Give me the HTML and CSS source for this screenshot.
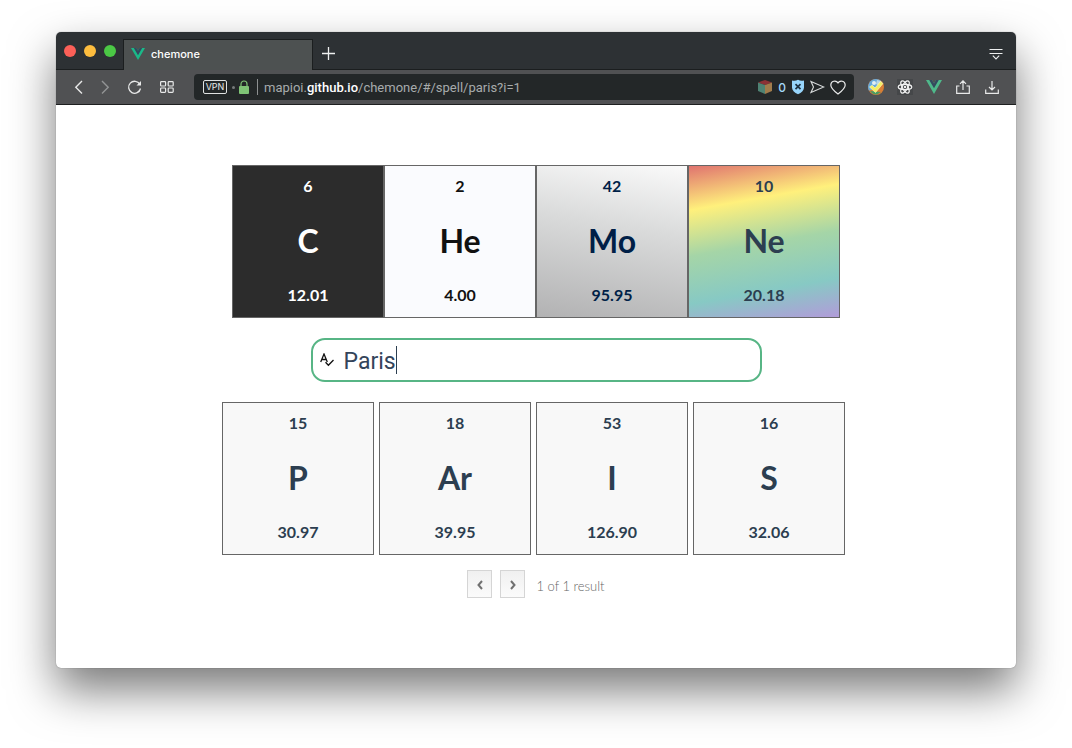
FILE: index.html
```html
<!DOCTYPE html>
<html lang="en">
<head>
<meta charset="utf-8">
<title>chemone</title>
<link rel="stylesheet" href="styles.css">
</head>
<body>
<div class="window">
  <header class="tabstrip">
    <div class="lights">
      <button class="light close" aria-label="Close"></button>
      <button class="light minimize" aria-label="Minimize"></button>
      <button class="light expand" aria-label="Zoom"></button>
    </div>
    <a class="tab" href="#/spell/paris">
      <svg width="14" height="14" viewBox="0 0 14 14"><path d="M0 1h5.4L7 3.8 8.600 1H14L7 13z" fill="#1bb988"/><path d="M2.800 1h2.600L7 3.800 8.600 1h2.600L7 8.200z" fill="#34495e"/></svg>
      <span>chemone</span>
    </a>
    <button class="icon newtab" aria-label="New tab">
      <svg width="13" height="13" viewBox="0 0 13 13" fill="none" stroke="#eef0f0" stroke-width="1.300"><path d="M6.500 0v13M0 6.500h13"/></svg>
    </button>
    <button class="icon tabmenu" aria-label="Tab menu">
      <svg width="14" height="12" viewBox="0 0 14 12" fill="none" stroke="#eef0f0" stroke-width="1.100"><path d="M.5 1.500h13M.5 5.500h13M3.800 7.700 7 11l3.200-3.300"/></svg>
    </button>
  </header>

  <nav class="toolbar">
    <button class="icon" aria-label="Back"><svg width="16" height="16" viewBox="0 0 16 16" fill="none" stroke="#e8e9e9" stroke-width="1.400"><path d="M11 2 4.800 8.200 11 14.400"/></svg></button>
    <button class="icon" aria-label="Forward"><svg width="16" height="16" viewBox="0 0 16 16" fill="none" stroke="#929495" stroke-width="1.400"><path d="m5 2 6.200 6.200L5 14.400"/></svg></button>
    <button class="icon reload" aria-label="Reload"><svg width="16" height="16" viewBox="0 0 16 16" fill="none" stroke="#e8e9e9" stroke-width="1.300"><path d="M12.800 5.200A6 6 0 1 0 13.500 9.500"/><path d="M14 2v4.500H9.500z" fill="#e8e9e9" stroke="none"/></svg></button>
    <button class="icon speed" aria-label="Speed dial"><svg width="14" height="12" viewBox="0 0 14 12" fill="none" stroke="#e8e9e9" stroke-width="1.200"><rect x=".6" y=".6" width="5" height="4.400" rx=".8"/><rect x="8.200" y=".6" width="5" height="4.400" rx=".8"/><rect x=".6" y="7" width="5" height="4.400" rx=".8"/><rect x="8.200" y="7" width="5" height="4.400" rx=".8"/></svg></button>

    <div class="address">
      <button class="vpn">VPN</button>
      <span class="dot"></span>
      <svg class="lock" width="10" height="14" viewBox="0 0 10 14"><rect x="0" y="6" width="10" height="8" rx="1" fill="#7fc476"/><path d="M2 6V4a3 3 0 0 1 6 0v2" fill="none" stroke="#7fc476" stroke-width="1.200"/></svg>
      <span class="rule"></span>
      <a class="url" href="#/spell/paris?i=1">mapioi.<b>github.io</b>/chemone/#/spell/paris?i=1</a>
      <div class="badges">
        <svg width="16" height="16" viewBox="0 0 16 16"><path d="m8 1 7 2.500L8 6 1 3.500z" fill="#8c3136"/><path d="M1 3.500 8 6v9l-7-3z" fill="#4e8273"/><path d="M15 3.500 8 6v9l7-3z" fill="#a17c4c"/></svg>
        <span class="count">0</span>
        <svg width="14" height="16" viewBox="0 0 14 16"><path d="M1 1.500Q4 2.500 7 .8q3 1.700 6 .7v7.300Q12.500 13 7 15.300 1.500 13 1 8.800z" fill="#97d5fb"/><path d="m4.500 5.200 5 5m0-5-5 5" stroke="#1d3344" stroke-width="1.700"/></svg>
        <svg width="15" height="14" viewBox="0 0 15 14" fill="none" stroke="#d9dcdc" stroke-width="1.100"><path d="M1 1.500 13.800 7 1 12.500 3.500 7z"/></svg>
        <svg width="16" height="15" viewBox="0 0 16 15" fill="none" stroke="#e8e9e9" stroke-width="1.200"><path d="M8 14C3.500 10.500.8 8 .8 4.900A3.900 3.900 0 0 1 8 2.900a3.900 3.900 0 0 1 7.200 2C15.200 8 12.500 10.500 8 14z"/></svg>
      </div>
    </div>

    <div class="extensions">
      <button class="icon" aria-label="Web check"><svg width="18" height="18" viewBox="0 0 18 18"><circle cx="9" cy="9" r="8" fill="#d87e35"/><path d="M9 1A8 8 0 0 0 2 12.800L11 9l3-6Q12 1 9 1z" fill="#66a9dc"/><path d="m10 2 4 1 1 3-3 2-3-2z" fill="#b8d6e6"/><circle cx="7" cy="5" r="2" fill="#e2eef5"/><path d="m3 13 11 1-4 2.500q-4 .5-7-3.500z" fill="#489b62"/><path d="m2.500 9 2.700-1.800L8 10l5.500-6.500 2.500 2-7.500 9z" fill="#f5ef63" stroke="#fffbc0" stroke-width=".6"/></svg></button>
      <button class="icon" aria-label="React tools"><svg width="16" height="16" viewBox="0 0 16 16" fill="none" stroke="#f2f2f2" stroke-width="1.200"><path d="M0 0h16v16H0z" fill="#454749" stroke="none"/><ellipse cx="8" cy="8" rx="6.800" ry="2.700"/><ellipse cx="8" cy="8" rx="6.800" ry="2.700" transform="rotate(60 8 8)"/><ellipse cx="8" cy="8" rx="6.800" ry="2.700" transform="rotate(120 8 8)"/><circle cx="8" cy="8" r="1.200" fill="#f2f2f2" stroke="none"/></svg></button>
      <button class="icon" aria-label="Vue tools"><svg width="16" height="14" viewBox="0 0 16 14"><path d="M0 0h6l2 3.400L10 0h6L8 14z" fill="#4fb98b"/><path d="M3.200 0H6l2 3.400L10 0h2.800L8 8.300z" fill="#35495e"/></svg></button>
      <button class="icon" aria-label="Share"><svg width="14" height="14" viewBox="0 0 14 14" fill="none" stroke="#e8e9e9" stroke-width="1.200"><path d="M3.500 6H.7v7.400h12.600V6h-2.800M7 10V1M4 3.800l3-3 3 3"/></svg></button>
      <button class="icon" aria-label="Downloads"><svg width="14" height="14" viewBox="0 0 14 14" fill="none" stroke="#e8e9e9" stroke-width="1.200"><path d="M.7 9.500v3.900h12.600V9.500M7 1v9M4 7l3 3 3-3"/></svg></button>
    </div>
  </nav>

  <main class="page">
    <section class="title">
      <article class="element carbon"><span>6</span><strong>C</strong><span>12.01</span></article>
      <article class="element helium"><span>2</span><strong>He</strong><span>4.00</span></article>
      <article class="element molybdenum"><span>42</span><strong>Mo</strong><span>95.95</span></article>
      <article class="element neon"><span>10</span><strong>Ne</strong><span>20.18</span></article>
    </section>

    <label class="search" for="word">
      <svg width="14" height="14" viewBox="0 0 14 14" fill="none" stroke="#111" stroke-width="1.300"><path d="M.7 9 4 1l3.300 8M1.900 6.500h4.200M5.500 9.300l2.900 3L13.500 7"/></svg>
      <input id="word" type="text" value="Paris" aria-label="Word to spell" autocomplete="off">
      <span class="caret"></span>
    </label>

    <section class="spelling">
      <article class="element"><span>15</span><strong>P</strong><span>30.97</span></article>
      <article class="element"><span>18</span><strong>Ar</strong><span>39.95</span></article>
      <article class="element"><span>53</span><strong>I</strong><span>126.90</span></article>
      <article class="element"><span>16</span><strong>S</strong><span>32.06</span></article>
    </section>

    <footer class="pager">
      <button aria-label="Previous"><svg width="8" height="10" viewBox="0 0 8 10" fill="none" stroke="#707070" stroke-width="2"><path d="M6 1 2.500 5 6 9"/></svg></button>
      <button aria-label="Next"><svg width="8" height="10" viewBox="0 0 8 10" fill="none" stroke="#707070" stroke-width="2"><path d="M2 1l3.500 4L2 9"/></svg></button>
      <span>1 of 1 result</span>
    </footer>
  </main>
</div>
</body>
</html>
```
FILE: styles.css
```css
* { box-sizing: border-box; }

body {
  margin: 0;
  min-height: 100vh;
  padding: 32px 56px 80px;
  display: flex;
  background: #fff;
  font-family: Inter, "Liberation Sans", sans-serif;
}

button { padding: 0; border: 0; background: none; font: inherit; }
svg { display: block; flex: none; }

.window {
  flex: 1;
  display: flex;
  flex-direction: column;
  border-radius: 5px;
  background: #fff;
  box-shadow: 0 0 1px rgba(0, 0, 0, .5), 0 22px 46px rgba(0, 0, 0, .53);
}

.tabstrip {
  display: flex;
  align-items: flex-end;
  height: 38px;
  border-bottom: 1px solid #1b1e1f;
  border-radius: 5px 5px 0 0;
  background: #2d3134;
}

.lights { display: flex; gap: 8px; padding: 0 7px 12px 8px; }
.light { width: 12px; height: 12px; border-radius: 50%; }
.close { background: #fc6058; }
.minimize { background: #fdbd3e; }
.expand { background: #4bc845; }

.tab {
  display: flex;
  align-items: center;
  gap: 6px;
  width: 190px;
  height: 31px;
  margin-bottom: -1px;
  padding: 0 7px 2px;
  border: 1px solid #1b1e1f;
  border-bottom: 0;
  background: #4d5151;
  color: #fff;
  font-size: 11px;
  font-weight: 500;
  text-decoration: none;
}

.icon { display: flex; align-items: center; justify-content: center; }
.newtab { height: 32px; margin-left: 9px; }
.tabmenu { height: 30px; margin: 0 13px 0 auto; }

.toolbar {
  display: flex;
  align-items: center;
  height: 35px;
  padding: 0 15px;
  gap: 10px;
  border-bottom: 1px solid #1d1f20;
  background: #505153;
}

.reload { margin-left: 4px; }
.speed { margin-left: 7px; }

.address {
  flex: 1;
  display: flex;
  align-items: center;
  height: 26px;
  margin-left: 10px;
  padding: 0 8px 0 9px;
  border-radius: 4px;
  background: #232728;
}

.vpn {
  width: 24px;
  height: 14px;
  border: 1px solid #dfe1e1;
  border-radius: 2px;
  color: #e8eaea;
  font-size: 9px;
  line-height: 12px;
}

.dot { width: 3px; height: 3px; margin: 0 4px 0 5px; border-radius: 50%; background: #777b7c; }
.rule { width: 1px; height: 16px; margin: 0 6px 0 8px; background: #8d9091; }
.url { color: #a7abac; font-family: Roboto, "Liberation Sans", sans-serif; font-size: 13px; text-decoration: none; white-space: nowrap; }
.url b { color: #fff; font-weight: 500; }
.badges { display: flex; align-items: center; gap: 5px; margin-left: auto; }
.count { color: #a5d9f8; font-size: 12px; font-weight: 500; }

.extensions { display: flex; align-items: center; gap: 11px; margin-left: 3px; }
.extensions .icon { width: 18px; }

.page {
  flex: 1;
  display: flex;
  flex-direction: column;
  align-items: center;
  padding: 60px 16px;
  color: #2c3e50;
  font-family: Lato, "Noto Sans", sans-serif;
}

.title, .spelling { display: flex; flex-wrap: wrap; justify-content: center; }
.spelling { gap: 5px; padding-right: 5px; }

.element {
  display: flex;
  flex-direction: column;
  justify-content: space-between;
  width: 152px;
  height: 153px;
  padding: 10px 0 12px;
  border: 1px solid #666;
  background: #f8f8f8;
  font-size: 16px;
  font-weight: 700;
  line-height: 20px;
  text-align: center;
}

.element strong { font-size: 32px; font-weight: 700; line-height: 40px; }

.carbon { background: #2c2c2c; color: #fff; }
.helium { background: #fafbfe; color: #111; }
.molybdenum { background: linear-gradient(190deg, #fafafa, #dadbdb 40%, #b2b2b3); color: #001f47; }
.neon { background: linear-gradient(170deg, #e0736f, #fff07c 25%, #a5d5a7 51%, #87c9c4 78%, #b19cd9); }

.search {
  display: flex;
  align-items: center;
  width: 451px;
  max-width: 100%;
  height: 44px;
  margin: 20px 0;
  padding: 0 7px;
  border: 2px solid #57b585;
  border-radius: 14px;
  cursor: text;
}

.search input {
  field-sizing: content;
  max-width: 380px;
  margin-left: 10px;
  padding: 2px 0 0;
  border: 0;
  outline: 0;
  background: none;
  color: #34445a;
  font-family: Roboto, "Liberation Sans", sans-serif;
  font-size: 23px;
}

.caret { width: 1px; height: 28px; background: #2c3e50; }

.pager {
  display: flex;
  align-items: center;
  gap: 8px;
  margin-top: 15px;
  color: #666;
  font-size: 13px;
  font-weight: 300;
}

.pager button {
  display: grid;
  place-items: center;
  width: 25px;
  height: 28px;
  padding-top: 2px;
  border: 1px solid #d5d5d5;
  background: linear-gradient(#f0f0f0, #fbfbfb);
}

.pager span { margin: 4px 0 0 3px; }
```
